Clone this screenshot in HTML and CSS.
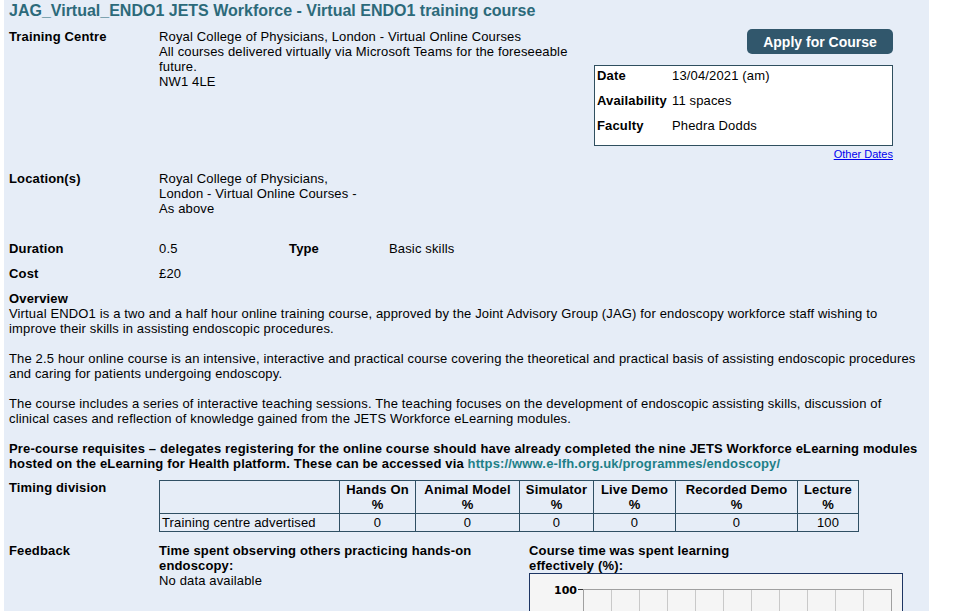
FILE: index.html
```html
<!DOCTYPE html>
<html lang="en">

<head>
    <meta charset="UTF-8" />
    <meta name="viewport" content="width=device-width, initial-scale=1" />
    <title>JAG_Virtual_ENDO1 JETS Workforce - Virtual ENDO1 training course</title>
    <link rel="stylesheet" href="styles.css">
</head>

<body>
    <div class="page">
        <h1 class="course-title">JAG_Virtual_ENDO1 JETS Workforce - Virtual ENDO1 training course</h1>

        <div class="row row-centre">
            <div class="label">Training Centre</div>
            <div class="value value-centre">
                Royal College of Physicians, London - Virtual Online Courses<br>
                All courses delivered virtually via Microsoft Teams for the foreseeable future.<br>
                NW1 4LE
            </div>
            <div class="booking">
                <button class="apply">Apply for Course</button>
                <div class="session">
                    <div class="session-label">Date</div>
                    <div>13/04/2021 (am)</div>
                    <div class="session-label">Availability</div>
                    <div>11 spaces</div>
                    <div class="session-label">Faculty</div>
                    <div>Phedra Dodds</div>
                </div>
                <a class="other-dates" href="#">Other Dates</a>
            </div>
        </div>

        <div class="row row-location">
            <div class="label">Location(s)</div>
            <div class="value value-location">Royal College of Physicians, London - Virtual Online Courses - As above</div>
        </div>

        <div class="row row-duration">
            <div class="label">Duration</div>
            <div class="value value-short">0.5</div>
            <div class="label label-type">Type</div>
            <div class="value">Basic skills</div>
        </div>

        <div class="row row-cost">
            <div class="label">Cost</div>
            <div class="value">£20</div>
        </div>

        <div class="overview">
            <h2>Overview</h2>
            <p>Virtual ENDO1 is a two and a half hour online training course, approved by the Joint Advisory Group (JAG) for endoscopy workforce staff wishing to improve their skills in assisting endoscopic procedures.</p>
            <p>The 2.5 hour online course is an intensive, interactive and practical course covering the theoretical and practical basis of assisting endoscopic procedures and caring for patients undergoing endoscopy.</p>
            <p>The course includes a series of interactive teaching sessions. The teaching focuses on the development of endoscopic assisting skills, discussion of clinical cases and reflection of knowledge gained from the JETS Workforce eLearning modules.</p>
            <p class="requisites">Pre-course requisites – delegates registering for the online course should have already completed the nine JETS Workforce eLearning modules hosted on the eLearning for Health platform. These can be accessed via <a class="elfh" href="#">https://www.e-lfh.org.uk/programmes/endoscopy/</a></p>
        </div>

        <div class="row row-timing">
            <div class="label">Timing division</div>
            <table class="timing">
                <colgroup>
                    <col style="width: 180px;">
                    <col style="width: 76px;">
                    <col style="width: 104px;">
                    <col style="width: 74px;">
                    <col style="width: 82px;">
                    <col style="width: 122px;">
                    <col style="width: 61px;">
                </colgroup>
                <tr>
                    <th></th>
                    <th>Hands On<br>%</th>
                    <th>Animal Model<br>%</th>
                    <th>Simulator<br>%</th>
                    <th>Live Demo<br>%</th>
                    <th>Recorded Demo<br>%</th>
                    <th>Lecture<br>%</th>
                </tr>
                <tr>
                    <td class="source">Training centre advertised</td>
                    <td>0</td>
                    <td>0</td>
                    <td>0</td>
                    <td>0</td>
                    <td>0</td>
                    <td>100</td>
                </tr>
            </table>
        </div>

        <div class="row row-feedback">
            <div class="label">Feedback</div>
            <div class="fb-observe">
                <div class="fb-heading">Time spent observing others practicing hands-on endoscopy:</div>
                <div>No data available</div>
            </div>
            <div class="fb-effective">
                <div class="fb-heading fb-heading-narrow">Course time was spent learning effectively (%):</div>
                <div class="chart">
                    <svg width="372" height="276" viewBox="0 0 372 276">
                        <g stroke="#c9c9c9" stroke-width="1">
                            <line x1="81.5" y1="15" x2="81.5" y2="235" />
                            <line x1="109.5" y1="15" x2="109.5" y2="235" />
                            <line x1="137.5" y1="15" x2="137.5" y2="235" />
                            <line x1="165.5" y1="15" x2="165.5" y2="235" />
                            <line x1="193.5" y1="15" x2="193.5" y2="235" />
                            <line x1="221.5" y1="15" x2="221.5" y2="235" />
                            <line x1="249.5" y1="15" x2="249.5" y2="235" />
                            <line x1="277.5" y1="15" x2="277.5" y2="235" />
                            <line x1="305.5" y1="15" x2="305.5" y2="235" />
                            <line x1="333.5" y1="15" x2="333.5" y2="235" />
                            <line x1="53" y1="59.5" x2="361" y2="59.5" />
                            <line x1="53" y1="103.5" x2="361" y2="103.5" />
                            <line x1="53" y1="147.5" x2="361" y2="147.5" />
                            <line x1="53" y1="191.5" x2="361" y2="191.5" />
                        </g>
                        <g stroke="#a0a0a0" stroke-width="1" fill="none">
                            <rect x="53.5" y="15.5" width="308" height="220" />
                        </g>
                        <g stroke="#333" stroke-width="1">
                            <line x1="48" y1="15.5" x2="53" y2="15.5" />
                            <line x1="48" y1="59.5" x2="53" y2="59.5" />
                            <line x1="48" y1="103.5" x2="53" y2="103.5" />
                            <line x1="48" y1="147.5" x2="53" y2="147.5" />
                            <line x1="48" y1="191.5" x2="53" y2="191.5" />
                            <line x1="48" y1="235.5" x2="53" y2="235.5" />
                        </g>
                        <g class="axis-text" text-anchor="end">
                            <text x="47" y="20">100</text>
                            <text x="47" y="64">80</text>
                            <text x="47" y="108">60</text>
                            <text x="47" y="152">40</text>
                            <text x="47" y="196">20</text>
                            <text x="47" y="240">0</text>
                        </g>
                    </svg>
                </div>
            </div>
        </div>
    </div>
</body>

</html>
```

FILE: styles.css
```css
body {
    margin: 0;
    font-family: "Liberation Sans", Arial, sans-serif;
    font-size: 13px;
    line-height: 15px;
    letter-spacing: 0.15px;
    color: #000;
    background: #fff;
}

.page {
    margin-left: 4px;
    width: 915px;
    padding: 2px 5px 20px;
    background: #e6edf7;
}

.course-title {
    margin: 0;
    font-size: 16px;
    line-height: 18px;
    letter-spacing: 0;
    color: #2c6a7a;
}

.row {
    display: flex;
    align-items: flex-start;
}

.label {
    width: 150px;
    flex-shrink: 0;
    font-weight: bold;
}

.row-centre {
    margin-top: 9px;
}

.value-centre {
    width: 435px;
}

.booking {
    width: 299px;
}

.apply {
    display: block;
    margin-left: auto;
    width: 146px;
    height: 25px;
    padding: 0;
    border: none;
    border-radius: 5px;
    background: #31576c;
    color: #fff;
    font-family: "Liberation Sans", Arial, sans-serif;
    font-size: 14px;
    font-weight: bold;
    cursor: pointer;
}

.session {
    margin-top: 11px;
    padding: 2px;
    border: 1px solid #2f4f5f;
    background: #fff;
    display: grid;
    grid-template-columns: 75px 1fr;
    grid-auto-rows: 25px;
}

.session-label {
    font-weight: bold;
}

.other-dates {
    display: block;
    margin-top: 2px;
    text-align: right;
    font-size: 11px;
    line-height: 13px;
    letter-spacing: 0;
    color: #0000ee;
}

.row-location {
    margin-top: 10px;
}

.value-location {
    width: 210px;
}

.row-duration {
    margin-top: 25px;
}

.value-short {
    width: 130px;
}

.label-type {
    width: 100px;
}

.row-cost {
    margin-top: 10px;
}

.overview {
    margin-top: 10px;
}

.overview h2 {
    margin: 0;
    font-size: 13px;
    line-height: 15px;
}

.overview p {
    margin: 0 0 15px;
}

.overview p.requisites {
    margin: 0;
    font-weight: bold;
}

.elfh {
    color: #1e7f87;
    text-decoration: none;
}

.row-timing {
    margin-top: 9px;
}

.timing {
    border-collapse: collapse;
    table-layout: fixed;
    width: 700px;
}

.timing th,
.timing td {
    border: 1px solid #2f4f63;
    padding: 1px 2px;
    text-align: center;
    font-size: 13px;
    line-height: 15px;
}

.timing td.source {
    text-align: left;
}

.row-feedback {
    margin-top: 11px;
}

.fb-observe {
    width: 370px;
}

.fb-heading {
    font-weight: bold;
}

.fb-heading-narrow {
    width: 240px;
}

.chart {
    width: 372px;
    height: 276px;
    border: 1px solid #1d3563;
    background: #f5f5f5;
}

.chart svg {
    display: block;
}

.axis-text {
    font-family: "DejaVu Sans", sans-serif;
    font-size: 11px;
    font-weight: bold;
    letter-spacing: 0;
    fill: #000;
}
```
